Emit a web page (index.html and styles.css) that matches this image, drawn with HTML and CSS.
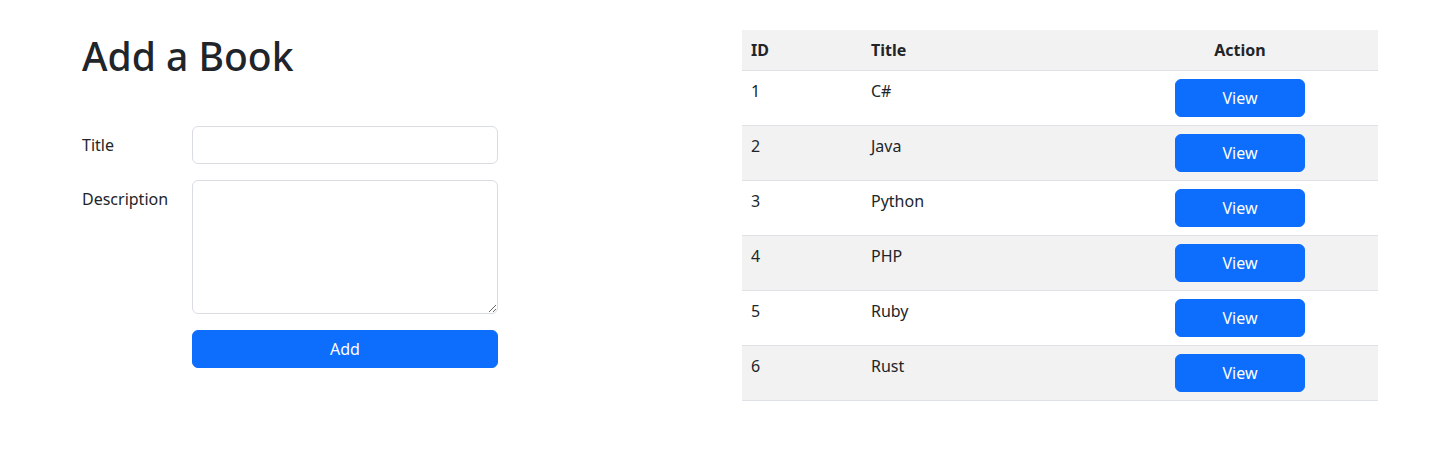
FILE: index.html
```html
<!DOCTYPE html>
<html lang="en">
<head>
<meta charset="utf-8">
<title>Books</title>
<link rel="stylesheet" href="styles.css">
</head>
<body>
<div class="page">
  <section class="form-col">
    <h1 class="heading">Add a Book</h1>
    <form class="book-form">
      <div class="form-row">
        <label class="form-label" for="title">Title</label>
        <input class="form-input" id="title" type="text">
      </div>
      <div class="form-row">
        <label class="form-label" for="desc">Description</label>
        <textarea class="form-input form-textarea" id="desc"></textarea>
      </div>
      <div class="form-row">
        <span class="form-label"></span>
        <button type="button" class="btn btn-wide">Add</button>
      </div>
    </form>
  </section>
  <section class="table-col">
    <table class="books">
      <thead>
        <tr><th class="c-id">ID</th><th class="c-title">Title</th><th class="c-action">Action</th></tr>
      </thead>
      <tbody>
        <tr><td>1</td><td>C#</td><td class="c-action"><button type="button" class="btn btn-view">View</button></td></tr>
        <tr><td>2</td><td>Java</td><td class="c-action"><button type="button" class="btn btn-view">View</button></td></tr>
        <tr><td>3</td><td>Python</td><td class="c-action"><button type="button" class="btn btn-view">View</button></td></tr>
        <tr><td>4</td><td>PHP</td><td class="c-action"><button type="button" class="btn btn-view">View</button></td></tr>
        <tr><td>5</td><td>Ruby</td><td class="c-action"><button type="button" class="btn btn-view">View</button></td></tr>
        <tr><td>6</td><td>Rust</td><td class="c-action"><button type="button" class="btn btn-view">View</button></td></tr>
      </tbody>
    </table>
  </section>
</div>
</body>
</html>
```
FILE: styles.css
```css
* { box-sizing: border-box; }
body {
  margin: 0;
  font-family: "Noto Sans", "Open Sans", sans-serif;
  font-size: 16px;
  line-height: 24px;
  color: #212529;
  background: #fff;
}
.page {
  display: flex;
  padding: 30px 0 0 82px;
}
.form-col {
  width: 660px;
}
.heading {
  margin: 2px 0 46px;
  font-size: 39px;
  font-weight: 500;
  line-height: 48px;
}
.book-form {
  display: flex;
  flex-direction: column;
  gap: 16px;
}
.form-row {
  display: flex;
  align-items: flex-start;
}
.form-label {
  width: 110px;
  padding-top: 7px;
  flex: none;
}
.form-input {
  width: 306px;
  height: 38px;
  border: 1px solid #d9dde2;
  border-radius: 6px;
  font: inherit;
  padding: 6px 12px;
  background: #fff;
}
.form-textarea {
  height: 134px;
  resize: vertical;
}
.btn {
  background: #0d6efd;
  color: #fff;
  border: 1px solid #0d6efd;
  border-radius: 6px;
  font: inherit;
  height: 38px;
  padding: 6px 12px;
  cursor: pointer;
}
.btn-wide { width: 306px; }
.btn-view { width: 130px; }
.table-col {
  width: 636px;
}
.books {
  width: 636px;
  border-collapse: collapse;
}
.books th, .books td {
  padding: 8px 9px;
  text-align: left;
  vertical-align: top;
  border-bottom: 1px solid #dee2e6;
}
.books th { font-weight: 700; background: #f2f2f2; }
.books tbody tr:nth-child(even) td { background: #f2f2f2; }
.books td { height: 55px; }
.c-id { width: 120px; }
.c-title { width: 240px; }
.books .c-action { text-align: center; }
```
